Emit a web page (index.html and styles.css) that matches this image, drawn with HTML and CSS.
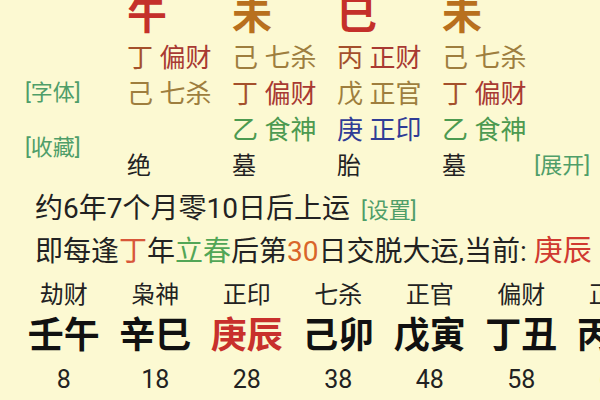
FILE: index.html
```html
<!DOCTYPE html>
<html lang="zh">
<head>
<meta charset="utf-8">
<link rel="stylesheet" href="styles.css">
</head>
<body>
<div class="page">
  <section class="top">
    <div class="side">
      <span class="link">[字体]</span>
      <span class="link">[收藏]</span>
    </div>
    <div class="pillars">
      <div class="big red">午</div>
      <div class="big brown">未</div>
      <div class="big red">巳</div>
      <div class="big brown">未</div>

      <div class="cell"><span class="fire">丁</span> <span class="fire2">偏财</span></div>
      <div class="cell earth">己 七杀</div>
      <div class="cell"><span class="fire">丙</span> <span class="fire2">正财</span></div>
      <div class="cell earth">己 七杀</div>

      <div class="cell earth">己 七杀</div>
      <div class="cell"><span class="fire">丁</span> <span class="fire2">偏财</span></div>
      <div class="cell earth">戊 正官</div>
      <div class="cell"><span class="fire">丁</span> <span class="fire2">偏财</span></div>

      <div class="cell"></div>
      <div class="cell wood">乙 食神</div>
      <div class="cell metal">庚 正印</div>
      <div class="cell wood">乙 食神</div>

      <div class="cell stage">绝</div>
      <div class="cell stage">墓</div>
      <div class="cell stage">胎</div>
      <div class="cell stage">墓</div>
    </div>
    <div class="more">
      <span class="link">[展开]</span>
    </div>
  </section>

  <section class="info">
    <p class="line">约6年7个月零10日后上运 <span class="link small">[设置]</span></p>
    <p class="line">即每逢<span class="c-ding">丁</span>年<span class="c-green">立春</span>后第<span class="c-num">30</span>日交脱大运,当前: <span class="c-cur">庚辰</span></p>
  </section>

  <section class="luck">
    <div class="col"><div class="god">劫财</div><div class="gz">壬午</div><div class="age">8</div></div>
    <div class="col"><div class="god">枭神</div><div class="gz">辛巳</div><div class="age">18</div></div>
    <div class="col"><div class="god">正印</div><div class="gz cur">庚辰</div><div class="age">28</div></div>
    <div class="col"><div class="god">七杀</div><div class="gz">己卯</div><div class="age">38</div></div>
    <div class="col"><div class="god">正官</div><div class="gz">戊寅</div><div class="age">48</div></div>
    <div class="col"><div class="god">偏财</div><div class="gz">丁丑</div><div class="age">58</div></div>
    <div class="col"><div class="god">正财</div><div class="gz">丙子</div><div class="age">68</div></div>
  </section>
</div>
</body>
</html>
```

FILE: styles.css
```css
html, body {
  margin: 0;
  padding: 0;
}
body {
  width: 600px;
  height: 400px;
  overflow: hidden;
  background: #fcf9d2;
  font-family: Roboto, "Noto Sans CJK SC", sans-serif;
  color: #222;
}
.page {
  width: 600px;
}
.top {
  display: flex;
  margin-top: -4px;
  padding-left: 25px;
  padding-right: 10px;
}
.side {
  width: 102px;
  flex: none;
  display: flex;
  flex-direction: column;
  gap: 19px;
  padding-top: 79px;
}
.link {
  color: #4f9e69;
  font-size: 22px;
  line-height: 36px;
}
.pillars {
  display: grid;
  grid-template-columns: 105px 105px 105px auto;
  grid-template-rows: 44px 36px 36px 36px 36px;
}
.big {
  font-size: 40px;
  line-height: 40px;
  font-weight: 700;
}
.red { color: #c4302a; }
.brown { color: #b8701e; }
.cell {
  font-size: 26px;
  line-height: 36px;
  white-space: nowrap;
}
.fire { color: #a4502c; }
.fire2 { color: #a83a32; }
.earth { color: #9e7e3e; }
.wood { color: #4c9a50; }
.metal { color: #2f3c96; }
.stage {
  font-size: 24px;
  color: #222;
}
.more {
  margin-left: auto;
  display: flex;
  align-items: flex-end;
}
.info {
  margin-top: 3px;
  padding-left: 35px;
}
.line {
  margin: 0;
  font-size: 28px;
  line-height: 43px;
  white-space: nowrap;
}
.small {
  font-size: 22px;
  margin-left: 4px;
}
.c-ding { color: #d8573a; }
.c-green { color: #52a656; }
.c-num { color: #d9652a; }
.c-cur { color: #d03a30; font-size: 29px; }
.luck {
  display: flex;
  padding-left: 18px;
  margin-top: 2px;
}
.col {
  flex: none;
  width: 91.5px;
  text-align: center;
}
.god {
  font-size: 24px;
  line-height: 40px;
}
.gz {
  font-size: 36px;
  line-height: 42px;
  font-weight: 700;
  color: #111;
}
.gz.cur { color: #c8302c; }
.age {
  font-size: 25px;
  line-height: 46px;
}
```
